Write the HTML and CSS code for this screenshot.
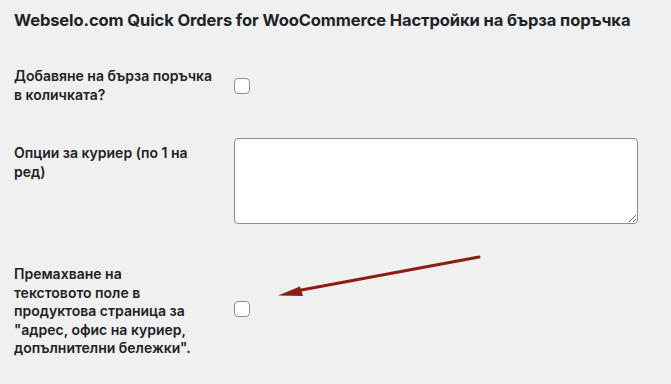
FILE: index.html
```html
<!DOCTYPE html>
<html lang="bg">
<head>
<meta charset="utf-8">
<title>Webselo.com Quick Orders</title>
<link rel="stylesheet" href="styles.css">
</head>
<body>
<div class="wrap">
  <h2 class="page-title">Webselo.com Quick Orders for WooCommerce Настройки на бърза поръчка</h2>
  <table class="form-table">
    <tr class="row row-1">
      <th class="label">Добавяне на бърза поръчка<br>в количката?</th>
      <td class="field"><span class="checkbox"></span></td>
    </tr>
    <tr class="row row-2">
      <th class="label">Опции за куриер (по 1 на<br>ред)</th>
      <td class="field"><textarea class="textarea"></textarea></td>
    </tr>
    <tr class="row row-3">
      <th class="label">Премахване на<br>текстовото поле в<br>продуктова страница за<br>"адрес, офис на куриер,<br>допълнителни бележки".</th>
      <td class="field"><span class="checkbox"></span></td>
    </tr>
  </table>
  <svg class="arrow" width="671" height="384" viewBox="0 0 671 384">
    <line x1="479" y1="257" x2="296" y2="291" stroke="#8d1c12" stroke-width="3" stroke-linecap="round"/>
    <polygon points="278,295.5 300,286.5 303,296" fill="#8d1c12"/>
  </svg>
</div>
</body>
</html>
```
FILE: styles.css
```css
html, body {
  margin: 0;
  padding: 0;
  background: #f0f0f1;
}
body {
  font-family: Inter, "Liberation Sans", "DejaVu Sans", sans-serif;
  color: #1d2327;
  width: 671px;
  height: 384px;
  overflow: hidden;
}
.wrap {
  position: relative;
  padding: 0 14px;
}
.page-title {
  margin: 0;
  padding-top: 9px;
  font-size: 16.5px;
  line-height: 22px;
  font-weight: 700;
  letter-spacing: -0.1px;
}
.form-table {
  border-collapse: collapse;
  margin-top: 24px;
}
.label {
  width: 200px;
  padding: 0 20px 0 0;
  text-align: left;
  vertical-align: top;
  font-size: 14px;
  line-height: 18.5px;
  font-weight: 600;
  white-space: nowrap;
}
.field {
  padding: 0;
  vertical-align: middle;
}
.row-1 .label { padding-top: 12px; padding-bottom: 20px; }
.row-1 .field { padding-bottom: 8px; }
.row-2 .label { padding-top: 20px; }
.row-2 .field { padding-top: 14px; padding-bottom: 17px; }
.row-3 .label { padding-top: 24px; }
.row-3 .field { padding-top: 20px; }
.checkbox {
  display: block;
  width: 14px;
  height: 14px;
  border: 1px solid #8c8f94;
  border-radius: 4px;
  background: #fff;
}
.textarea {
  display: block;
  box-sizing: border-box;
  width: 404px;
  height: 86px;
  margin: 0;
  border: 1px solid #8c8f94;
  border-radius: 4px;
  background: #fff;
  font-family: inherit;
}
.arrow {
  position: absolute;
  left: 0;
  top: 0;
  pointer-events: none;
}
```
